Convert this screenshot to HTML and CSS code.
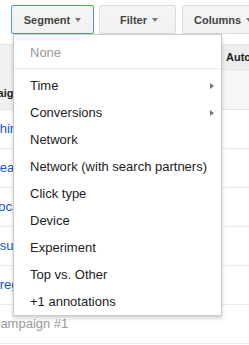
FILE: index.html
```html
<!DOCTYPE html>
<html lang="en">
<head>
  <meta charset="UTF-8">
  <title>Campaigns - Segment</title>
  <link rel="stylesheet" href="styles.css">
</head>
<body>

  <div class="toolbar">
    <span class="toolbar-sep"></span>
    <button class="btn btn-open" type="button">Segment <span class="caret"></span></button>
    <button class="btn btn-filter" type="button">Filter <span class="caret"></span></button>
    <button class="btn btn-columns" type="button">Columns <span class="caret"></span></button>
  </div>

  <div class="grid">
    <div class="hcell hcell-name">Campaign</div>
    <div class="hcell hcell-auto">Automated</div>
    <div class="hcell hcell-sub"></div>

    <div class="cell"><a href="#">Shirts sale</a></div><div class="cell"></div>
    <div class="cell"><a href="#">Search ads</a></div><div class="cell"></div>
    <div class="cell"><a href="#">Local stores</a></div><div class="cell"></div>
    <div class="cell"><a href="#">Asus laptops</a></div><div class="cell"></div>
    <div class="cell"><a href="#">Bregenz festival</a></div><div class="cell"></div>
    <div class="cell cell-muted">Campaign #1</div><div class="cell"></div>
  </div>

  <!-- segment dropdown, open -->
  <div class="menu">
    <div class="menu-item menu-item-disabled">None</div>
    <div class="menu-sep"></div>
    <div class="menu-item">Time <span class="sub-arrow"></span></div>
    <div class="menu-item">Conversions <span class="sub-arrow"></span></div>
    <div class="menu-item">Network</div>
    <div class="menu-item">Network (with search partners)</div>
    <div class="menu-item">Click type</div>
    <div class="menu-item">Device</div>
    <div class="menu-item">Experiment</div>
    <div class="menu-item">Top vs. Other</div>
    <div class="menu-item">+1 annotations</div>
  </div>

</body>
</html>
```

FILE: styles.css
```css
:root {
  --azul: #4d90fe;
  --link: #1155cc;
  --linea: #ebebeb;
  --gris-cabecera: #f1f1f1;
}

body {
  font-family: 'Liberation Sans', Arial, sans-serif;
  margin: 0;
  padding: 0;
  width: 249px;
  height: 345px;
  overflow: hidden;
  background-color: #fff;
  color: #222;
  position: relative;
}

.toolbar {
  height: 44px;
  box-sizing: border-box;
  padding-top: 5px;
  display: flex;
  align-items: flex-start;
}

.toolbar-sep {
  width: 1px;
  height: 33px;
  margin-top: -5px;
  margin-left: 3px;
  background-color: #e5e5e5;
}

.btn {
  height: 29px;
  box-sizing: border-box;
  border: 1px solid #dcdcdc;
  border-radius: 2px;
  background: linear-gradient(#f5f5f5, #f1f1f1);
  font-family: inherit;
  font-size: 11px;
  font-weight: bold;
  color: #444;
  display: flex;
  align-items: center;
  justify-content: center;
  gap: 5px;
  padding: 0;
  flex-shrink: 0;
}

.btn-open {
  width: 83px;
  margin-left: 8px;
  border-color: var(--azul);
}

.btn-filter {
  width: 77px;
  margin-left: 5px;
  padding-left: 3px;
}

.btn-columns {
  width: 90px;
  margin-left: 6px;
  justify-content: flex-start;
  padding-left: 11px;
}

.caret {
  width: 0;
  height: 0;
  border-top: 4px solid #777;
  border-left: 3.5px solid transparent;
  border-right: 3.5px solid transparent;
}

/* tabla de campañas */
.grid {
  margin-left: -40px;
  display: grid;
  grid-template-columns: 258px 80px;
  border-top: 1px solid #e5e5e5;
  font-size: 13px;
}

.hcell {
  font-size: 11px;
  font-weight: bold;
  color: #222;
  box-sizing: border-box;
}

.hcell-name {
  grid-row: span 2;
  background-color: var(--gris-cabecera);
  border-bottom: 1px solid #e5e5e5;
  display: flex;
  align-items: flex-end;
  padding: 0 0 9px 7px;
  line-height: 13px;
}

.hcell-auto {
  height: 25px;
  line-height: 24px;
  padding-left: 8px;
  background-color: #eeeeee;
  border-bottom: 1px solid #e2e2e2;
  white-space: nowrap;
}

.hcell-sub {
  height: 40px;
  background-color: #f6f6f6;
  border-bottom: 1px solid #e5e5e5;
}

.cell {
  height: 39px;
  box-sizing: border-box;
  line-height: 38px;
  padding-left: 31px;
  border-bottom: 1px solid var(--linea);
  white-space: nowrap;
  overflow: hidden;
}

.cell a {
  color: var(--link);
  text-decoration: none;
}

.cell-muted {
  color: #999;
}

/* menú desplegable */
.menu {
  position: absolute;
  left: 13px;
  top: 34px;
  width: 209px;
  box-sizing: border-box;
  background-color: #fff;
  border: 1px solid rgba(0,0,0,0.2);
  box-shadow: 0 2px 4px rgba(0,0,0,0.2);
  padding-top: 4px;
  font-size: 13px;
  z-index: 2;
}

.menu-item {
  height: 27px;
  line-height: 27px;
  padding: 0 7px 0 16px;
  color: #222;
  display: flex;
  align-items: center;
  justify-content: space-between;
  white-space: nowrap;
}

.menu-item-disabled {
  color: #999;
}

.menu-sep {
  height: 1px;
  margin: 2px 0 3px;
  background-color: var(--linea);
}

.sub-arrow {
  width: 0;
  height: 0;
  border-left: 4px solid #777;
  border-top: 3.5px solid transparent;
  border-bottom: 3.5px solid transparent;
}
```
